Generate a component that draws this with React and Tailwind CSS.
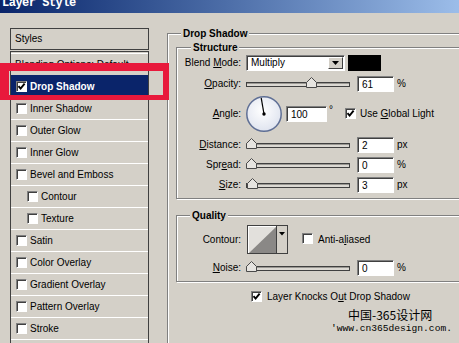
import React from "react";

function Check({ checked = false }) {
  return (
    <span className="inline-flex w-[11px] h-[11px] shrink-0 items-center justify-center bg-white border border-t-[#808080] border-l-[#808080] border-r-white border-b-white shadow-[inset_1px_1px_0_#404040]">
      {checked && (
        <svg width="9" height="9" viewBox="0 0 9 9">
          <path d="M1.5 4.2 L3.6 6.6 L7.6 1.6" stroke="#000" strokeWidth="1.9" fill="none" />
        </svg>
      )}
    </span>
  );
}

function Field({ value, w = "w-[37px]" }) {
  return (
    <div
      className={`${w} h-[16px] shrink-0 bg-white border border-t-[#808080] border-l-[#808080] border-r-white border-b-white shadow-[inset_1px_1px_0_#404040] pl-[4px] pt-[1px] leading-[13px] text-black`}
    >
      {value}
    </div>
  );
}

function Slider({ pos }) {
  return (
    <div className="relative w-[104px] h-[16px] shrink-0 pt-[6px]">
      <div className="w-full h-[5px] border border-[#404040] bg-[#dcd9d3] shadow-[inset_0_1px_0_#9a9893]" />
      <svg className="absolute top-[1px]" style={{ left: pos - 5 }} width="11" height="11" viewBox="0 0 11 11">
        <path d="M0.5 10.5 V5.5 L5.5 0.5 L10.5 5.5 V10.5 Z" fill="#e6e4e0" stroke="#4a4a4a" />
      </svg>
    </div>
  );
}

function Label({ children }) {
  return <div className="w-[64px] shrink-0 text-right">{children}</div>;
}

function SliderRow({ label, value, unit, pos, className }) {
  return (
    <div className={`flex items-center h-[16px] ${className}`}>
      <Label>{label}</Label>
      <div className="ml-[5px]">
        <Slider pos={pos} />
      </div>
      <div className="ml-[7px]">
        <Field value={value} />
      </div>
      <div className="ml-[3px]">{unit}</div>
    </div>
  );
}

const etched =
  "border border-[#808080] shadow-[inset_1px_1px_0_#ffffff,1px_1px_0_#ffffff]";

function Row({ label, checked, indent, selected, plain }) {
  return (
    <div
      className={`h-[22px] flex items-center border-t ${
        selected ? "bg-[#0a246a] text-white font-bold border-[#0a246a]" : "border-white"
      } ${plain ? "pl-[4px]" : indent ? "pl-[16px]" : "pl-[5px]"}`}
    >
      {!plain && <Check checked={checked} />}
      <span className={plain ? "" : "ml-[3px]"}>{label}</span>
    </div>
  );
}

export default function App() {
  return (
    <div className="relative w-[459px] h-[343px] overflow-hidden bg-[#d4d0c8] font-['Liberation_Sans',Arial,sans-serif] text-[10px] leading-none text-black">
      {/* title bar */}
      <div className="h-[13px] bg-gradient-to-r from-[#0a246a] to-[#9cbde9] overflow-hidden">
        <div className="pl-[2px] -mt-[4px] font-['Liberation_Mono',monospace] font-bold text-[12px] leading-[14px] tracking-[-0.5px] text-white">
          Layer Style
        </div>
      </div>

      <div className="flex">
        {/* left list */}
        <div className="ml-[10px] mt-[15px] w-[139px] shrink-0 flex flex-col">
          <div className="h-[22px] border border-[#404040] flex items-center pl-[4px]">Styles</div>
          <div className="mt-[1px] border-l border-r border-t border-[#404040] pt-[1px] flex flex-col h-[320px]">
            <Row label="Blending Options: Default" plain />
            <Row label="Drop Shadow" checked selected />
            <Row label="Inner Shadow" />
            <Row label="Outer Glow" />
            <Row label="Inner Glow" />
            <Row label="Bevel and Emboss" />
            <Row label="Contour" indent />
            <Row label="Texture" indent />
            <Row label="Satin" />
            <Row label="Color Overlay" />
            <Row label="Gradient Overlay" />
            <Row label="Pattern Overlay" />
            <Row label="Stroke" />
            <div className="h-[22px] border-t border-white" />
          </div>
        </div>

        {/* right: Drop Shadow group */}
        <div className={`ml-[18px] mt-[20px] w-[320px] h-[340px] shrink-0 ${etched} flex flex-col`}>
          <div className="-mt-[6px] ml-[13px] px-[2px] w-fit h-[12px] leading-[12px] bg-[#d4d0c8] font-bold">
            Drop Shadow
          </div>

          {/* Structure */}
          <div className={`ml-[8px] mt-[7px] w-[300px] ${etched} flex flex-col pb-[5px]`}>
            <div className="-mt-[6px] ml-[14px] px-[2px] w-fit h-[12px] leading-[12px] bg-[#d4d0c8] font-bold">
              Structure
            </div>
            <div className="mt-[1px] flex items-center h-[16px]">
              <Label>
                Blend <u>M</u>ode:
              </Label>
              <div className="ml-[5px] w-[99px] h-[16px] flex items-center justify-between bg-white border border-t-[#808080] border-l-[#808080] border-r-white border-b-white shadow-[inset_1px_1px_0_#404040] pl-[4px] pr-[1px]">
                <span>Multiply</span>
                <div className="w-[15px] h-[12px] bg-[#d4d0c8] border border-t-white border-l-white border-r-[#404040] border-b-[#404040] flex items-center justify-center">
                  <svg width="7" height="4" viewBox="0 0 7 4">
                    <path d="M0 0 H7 L3.5 4 Z" fill="#000" />
                  </svg>
                </div>
              </div>
              <div className="ml-[3px] w-[33px] h-[16px] bg-black" />
            </div>

            <SliderRow className="mt-[5px]" label={<><u>O</u>pacity:</>} value="61" unit="%" pos={65} />

            <div className="mt-[4px] flex items-center h-[36px]">
              <Label>
                <u>A</u>ngle:
              </Label>
              <svg className="ml-[4px] shrink-0" width="38" height="38" viewBox="0 0 38 38">
                <defs>
                  <radialGradient id="dial" cx="45%" cy="40%" r="65%">
                    <stop offset="0" stopColor="#ffffff" />
                    <stop offset="1" stopColor="#dde2ee" />
                  </radialGradient>
                </defs>
                <circle cx="19" cy="19" r="17.2" fill="url(#dial)" stroke="#5f6f95" strokeWidth="1.5" />
                <line x1="19" y1="19" x2="16.2" y2="2.8" stroke="#000" strokeWidth="1.2" />
                <circle cx="19" cy="19" r="1.7" fill="#000" />
              </svg>
              <div className="ml-[3px]">
                <Field value="100" w="w-[41px]" />
              </div>
              <div className="ml-[2px] self-start mt-[9px]">°</div>
              <div className="ml-[12px]">
                <Check checked />
              </div>
              <div className="ml-[4px]">
                Use <u>G</u>lobal Light
              </div>
            </div>

            <SliderRow className="mt-[5px]" label={<><u>D</u>istance:</>} value="2" unit="px" pos={5} />
            <SliderRow className="mt-[4px]" label={<>Spr<u>e</u>ad:</>} value="0" unit="%" pos={5} />
            <SliderRow className="mt-[4px]" label={<><u>S</u>ize:</>} value="3" unit="px" pos={6} />
          </div>

          {/* Quality */}
          <div className={`ml-[8px] mt-[16px] w-[300px] ${etched} flex flex-col pb-[5px]`}>
            <div className="-mt-[6px] ml-[13px] px-[2px] w-fit h-[12px] leading-[12px] bg-[#d4d0c8] font-bold">
              Quality
            </div>
            <div className="mt-[3px] flex items-center h-[29px]">
              <Label>Contour:</Label>
              <div className="ml-[6px] w-[41px] h-[29px] flex border border-[#404040] bg-[#d4d0c8]">
                <div className="w-[29px] h-full bg-[#e2e0dc] border-r border-[#404040] shadow-[inset_1px_1px_0_#ffffff]">
                  <svg width="28" height="27" viewBox="0 0 28 27">
                    <polygon points="1,27 28,1 28,27" fill="#8a8886" />
                  </svg>
                </div>
                <div className="flex-1 flex justify-center pt-[6px]">
                  <svg width="6" height="4" viewBox="0 0 6 4">
                    <path d="M0 0 H6 L3 3.5 Z" fill="#000" />
                  </svg>
                </div>
              </div>
              <div className="ml-[14px]">
                <Check />
              </div>
              <div className="ml-[5px]">
                Anti-a<u>l</u>iased
              </div>
            </div>
            <SliderRow className="mt-[6px]" label={<><u>N</u>oise:</>} value="0" unit="%" pos={5} />
          </div>

          <div className="mt-[9px] ml-[83px] flex items-center">
            <Check checked />
            <div className="ml-[5px]">
              Layer Knocks O<u>u</u>t Drop Shadow
            </div>
          </div>

          <div className="mt-[7px] ml-[180px] font-['Noto_Sans_CJK_SC','Noto_Sans',sans-serif] text-[12px] leading-[12px] whitespace-nowrap">
            中国-365设计网
          </div>
          <div className="mt-[2px] ml-[163px] font-['Liberation_Mono',monospace] text-[9.6px] leading-[12px] whitespace-nowrap">
            'www.cn365design.com.
          </div>
        </div>
      </div>

      {/* red highlight annotation */}
      <div className="absolute left-0 top-[63px] w-[169px] h-[37px] border-[#e8193c] border-t-[8px] border-b-[5px] border-l-[9px] border-r-[6px]" />
    </div>
  );
}
